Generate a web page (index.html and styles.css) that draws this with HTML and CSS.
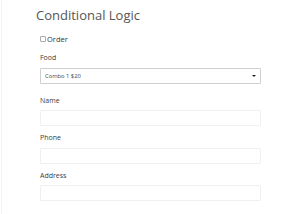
FILE: index.html
```html
<!DOCTYPE html>
<html>
<head>
<meta charset="utf-8">
<link rel="stylesheet" href="styles.css">
</head>
<body>
<div class="panel">
  <h2 class="title">Conditional Logic</h2>
  <form class="form">
    <label class="check"><span class="box"></span>Order</label>
    <div class="field field-select">
      <div class="label">Food</div>
      <div class="select"><span>Combo 1 $20</span><span class="caret"></span></div>
    </div>
    <div class="field">
      <div class="label">Name</div>
      <div class="input"></div>
    </div>
    <div class="field">
      <div class="label">Phone</div>
      <div class="input"></div>
    </div>
    <div class="field">
      <div class="label">Address</div>
      <div class="input"></div>
    </div>
  </form>
</div>
</body>
</html>
```
FILE: styles.css
```css
html, body {
  margin: 0;
  padding: 0;
  background: #fff;
}
body {
  font-family: "Open Sans", "Noto Sans", "Liberation Sans", sans-serif;
  color: #333;
}
.panel {
  margin-left: 1px;
  border-left: 1px solid #f2f2f2;
  height: 214px;
  box-sizing: border-box;
  padding-top: 6px;
}
.title {
  margin: 0 0 0 34px;
  font-size: 13px;
  line-height: 18px;
  font-weight: 400;
  color: #555;
}
.form {
  margin: 0 0 0 38px;
  width: 221px;
  display: flex;
  flex-direction: column;
}
.check {
  display: flex;
  align-items: center;
  font-size: 7.5px;
  line-height: 10px;
  margin-top: 10px;
  color: #333;
}
.box {
  width: 4px;
  height: 4px;
  border: 0.6px solid #aaa;
  border-radius: 1px;
  margin-right: 1px;
}
.field {
  display: flex;
  flex-direction: column;
}
.label {
  font-size: 7px;
  line-height: 10px;
  color: #3a3a3a;
  margin-bottom: 4.5px;
}
.field-select {
  margin-top: 9px;
}
.field + .field {
  margin-top: 7px;
}
.field-select + .field {
  margin-top: 12px;
}
.select {
  height: 16px;
  box-sizing: border-box;
  border: 1px solid #cfcfcf;
  border-radius: 1px;
  display: flex;
  align-items: center;
  justify-content: space-between;
  padding: 0 4px 0 4px;
  font-size: 5.8px;
  color: #444;
}
.caret {
  width: 0;
  height: 0;
  border-left: 2px solid transparent;
  border-right: 2px solid transparent;
  border-top: 2.5px solid #222;
}
.input {
  height: 16px;
  box-sizing: border-box;
  border: 1px solid #f0f0f0;
  border-radius: 1px;
}
```
